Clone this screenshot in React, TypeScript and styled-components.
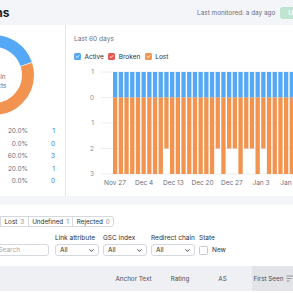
import React from 'react'
import styled, { createGlobalStyle } from 'styled-components'
import { ChevronDown } from 'lucide-react'

const GlobalStyle = createGlobalStyle`
    html, body {
        margin: 0;
        padding: 0;
        background: #f4f5f9;
    }
    body {
        font-family: Inter, 'Noto Sans', sans-serif;
        color: #2b2e38;
        overflow: hidden;
    }
`

const BLUE = '#55a8f5'
const ORANGE = '#f2944f'
const RED = '#e8574f'

const stats = [
    { label: 'Active', color: BLUE, pct: '20.0%', count: 1 },
    { label: 'Broken', color: RED, pct: '0.0%', count: 0 },
    { label: 'Lost', color: ORANGE, pct: '60.0%', count: 3 },
    { label: 'Undefined', color: '#c4c7d0', pct: '20.0%', count: 1 },
    { label: 'Rejected', color: '#8a8e99', pct: '0.0%', count: 0 },
]

const tabs = [
    { label: 'Active', count: 1 },
    { label: 'Broken', count: 0 },
    { label: 'Lost', count: 3 },
    { label: 'Undefined', count: 1 },
    { label: 'Rejected', count: 0 },
]

const filters = ['Link attribute', 'GSC index', 'Redirect chain']

// days where the lost count dropped to 2
const shortBars = [9, 18, 20, 21, 23, 24, 26, 33]
const dates = ['Nov 27', 'Dec 4', 'Dec 13', 'Dec 20', 'Dec 27', 'Jan 3', 'Jan 10', 'Jan 17']

const Donut = () => {
    const r = 34
    const c = 2 * Math.PI * r
    const parts = [
        { color: BLUE, value: 0.2 },
        { color: ORANGE, value: 0.6 },
        { color: '#c4c7d0', value: 0.2 },
    ]
    let offset = 0
    return (
        <svg width="80" height="80" viewBox="0 0 80 80">
            <g transform="rotate(-90 40 40)">
                {parts.map((p, i) => {
                    const len = p.value * c
                    const el = (
                        <circle
                            key={i}
                            cx="40"
                            cy="40"
                            r={r}
                            fill="none"
                            stroke={p.color}
                            strokeWidth="12"
                            strokeDasharray={`${len - 0.6} ${c - len + 0.6}`}
                            strokeDashoffset={-offset}
                        />
                    )
                    offset += len
                    return el
                })}
            </g>
        </svg>
    )
}

const TrendChart = () => {
    const unit = 25.5
    const zero = 31.5
    const period = 5.7
    const barW = 4.3
    const x0 = 39
    return (
        <svg width="267" height="124" viewBox="0 0 267 124" style={{ display: 'block' }}>
            {[1, 0, 1, 2, 3].map((v, i) => (
                <g key={i}>
                    <line x1="27" x2="267" y1={6 + i * unit} y2={6 + i * unit} stroke="#eceef2" strokeWidth="1" />
                    <text x="20" y={8.3 + i * unit} textAnchor="end" fontSize="6.5" fill="#8a8e99" fontFamily="Inter">
                        {v}
                    </text>
                </g>
            ))}
            {Array.from({ length: 40 }).map((_, i) => {
                const lost = shortBars.includes(i) ? 2 : 3
                const x = x0 + i * period
                return (
                    <g key={i}>
                        <rect x={x} y={zero - unit} width={barW} height={unit} fill={BLUE} />
                        <rect x={x} y={zero} width={barW} height={lost * unit} fill={ORANGE} />
                    </g>
                )
            })}
            {dates.map((d, i) => (
                <text key={d} x={41 + i * 29.2} y="119" textAnchor="middle" fontSize="6.5" fill="#6c6e79" fontFamily="Inter">
                    {d}
                </text>
            ))}
        </svg>
    )
}

const Check = () => (
    <svg width="5" height="5" viewBox="0 0 10 10">
        <path d="M2 5.2 L4.2 7.3 L8 3" fill="none" stroke="#fff" strokeWidth="1.8" strokeLinecap="round" strokeLinejoin="round" />
    </svg>
)

const SortIcon = () => (
    <svg width="8" height="7" viewBox="0 0 8 7">
        <path d="M0.5 1 H7.5 M0.5 3.5 H5.5 M0.5 6 H3.5" stroke="#8a8e99" strokeWidth="0.9" />
    </svg>
)

const App = () => {
    return (
        <>
            <GlobalStyle />
            <Viewport>
                <Page>
                    <Header>
                        <Title>Campaigns</Title>
                        <Monitored>Last monitored: a day ago</Monitored>
                        <UpdateButton>Update</UpdateButton>
                    </Header>

                    <Overview>
                        <Summary>
                            <DonutWrap>
                                <Donut />
                                <DonutLabel>
                                    Links in
                                    <br />
                                    projects
                                </DonutLabel>
                            </DonutWrap>
                            <StatList>
                                {stats.map((s) => (
                                    <StatRow key={s.label}>
                                        <StatName>
                                            <Swatch color={s.color} />
                                            {s.label}
                                        </StatName>
                                        <StatPct>{s.pct}</StatPct>
                                        <StatCount>{s.count}</StatCount>
                                    </StatRow>
                                ))}
                            </StatList>
                        </Summary>

                        <Trend>
                            <Caption>Last 60 days</Caption>
                            <Legend>
                                {[
                                    ['Active', BLUE],
                                    ['Broken', RED],
                                    ['Lost', ORANGE],
                                ].map(([name, color]) => (
                                    <LegendItem key={name}>
                                        <LegendBox color={color}>
                                            <Check />
                                        </LegendBox>
                                        {name}
                                    </LegendItem>
                                ))}
                            </Legend>
                            <ChartArea>
                                <TrendChart />
                            </ChartArea>
                        </Trend>
                    </Overview>

                    <LinksCard>
                        <Tabs>
                            {tabs.map((t) => (
                                <Tab key={t.label}>
                                    {t.label}
                                    <TabCount>{t.count}</TabCount>
                                </Tab>
                            ))}
                        </Tabs>

                        <Filters>
                            <SearchBox>Search</SearchBox>
                            {filters.map((f) => (
                                <Field key={f}>
                                    <FieldLabel>{f}</FieldLabel>
                                    <Select>
                                        All
                                        <ChevronDown size={7} strokeWidth={3} color="#2b2e38" />
                                    </Select>
                                </Field>
                            ))}
                            <Field>
                                <FieldLabel>State</FieldLabel>
                                <StateOption>
                                    <CheckBox />
                                    New
                                </StateOption>
                            </Field>
                        </Filters>

                        <TableHead>
                            <HeadCell>Source page</HeadCell>
                            <HeadCell align="center">Anchor Text</HeadCell>
                            <HeadCell align="center">Rating</HeadCell>
                            <HeadCell align="center" pad={10}>
                                AS
                            </HeadCell>
                            <HeadCell align="center" sorted>
                                First Seen
                                <SortIcon />
                            </HeadCell>
                            <HeadCell align="center" />
                        </TableHead>
                    </LinksCard>
                </Page>
            </Viewport>
        </>
    )
}

export default App

const Viewport = styled.div`
    width: 293px;
    height: 293px;
    overflow: hidden;
`

const Page = styled.div`
    width: 418px;
    margin-left: -77px;
    display: flex;
    flex-direction: column;
`

const Header = styled.div`
    height: 25px;
    display: flex;
    align-items: center;
    gap: 5px;
    padding: 0 22px 0 20px;
`

const Title = styled.h1`
    flex: 1;
    margin: 0;
    font-size: 12px;
    font-weight: 700;
    color: #171a22;
`

const Monitored = styled.span`
    font-size: 6.4px;
    color: #6c6e79;
`

const UpdateButton = styled.button`
    height: 12px;
    padding: 0 8px;
    border: 0;
    border-radius: 3px;
    background: #bfe4d2;
    color: #fff;
    font-family: Inter, sans-serif;
    font-size: 6.5px;
    font-weight: 600;
`

const Overview = styled.section`
    height: 171px;
    display: flex;
    background: #fff;
`

const Summary = styled.div`
    width: 143px;
    box-sizing: border-box;
    border-right: 1px solid #e6e7ec;
    padding-top: 10px;
    display: flex;
    flex-direction: column;
    align-items: center;
`

const DonutWrap = styled.div`
    position: relative;
    width: 80px;
    height: 80px;
`

const DonutLabel = styled.div`
    position: absolute;
    inset: 0;
    display: flex;
    align-items: center;
    justify-content: center;
    text-align: center;
    font-size: 6.5px;
    line-height: 9px;
    color: #6c6e79;
    padding-top: 14px;
`

const StatList = styled.div`
    width: 100%;
    margin-top: 10px;
`

const StatRow = styled.div`
    height: 12.5px;
    display: grid;
    grid-template-columns: 1fr 44px 27px;
    align-items: center;
    padding: 0 10px 0 16px;
    font-size: 6.5px;
`

const StatName = styled.span`
    display: flex;
    align-items: center;
    gap: 4px;
    color: #2b2e38;
`

const Swatch = styled.i`
    width: 5px;
    height: 5px;
    border-radius: 50%;
    background: ${(props) => props.color};
`

const StatPct = styled.span`
    text-align: right;
    color: #6c6e79;
`

const StatCount = styled.span`
    text-align: right;
    color: #2f7ee6;
`

const Trend = styled.div`
    flex: 1;
    padding: 9px 0 0 8px;
    display: flex;
    flex-direction: column;
`

const Caption = styled.div`
    font-size: 6.6px;
    line-height: 10px;
    color: #6c6e79;
`

const Legend = styled.div`
    display: flex;
    gap: 4.5px;
    margin-top: 8px;
    height: 9px;
    align-items: center;
`

const LegendItem = styled.span`
    display: flex;
    align-items: center;
    gap: 3.5px;
    font-size: 6.5px;
    color: #2b2e38;
`

const LegendBox = styled.span`
    width: 7px;
    height: 7px;
    border-radius: 1.5px;
    background: ${(props) => props.color};
    display: flex;
    align-items: center;
    justify-content: center;
`

const ChartArea = styled.div`
    margin-top: 4.5px;
`

const LinksCard = styled.section`
    margin-top: 9px;
    background: #fff;
    padding: 11px 16px 0 9px;
    height: 200px;
    display: flex;
    flex-direction: column;
    align-items: stretch;
`

const Tabs = styled.div`
    display: flex;
    align-self: flex-start;
    height: 11px;
    border: 1px solid #d6d8df;
    border-radius: 3px;
    box-sizing: border-box;
`

const Tab = styled.span`
    display: flex;
    align-items: center;
    gap: 3px;
    padding: 0 3.5px;
    font-size: 6.3px;
    color: #2b2e38;
    & + & {
        border-left: 1px solid #d6d8df;
    }
`

const TabCount = styled.span`
    color: #8a8e99;
`

const Filters = styled.div`
    display: flex;
    align-items: flex-end;
    gap: 4px;
    margin-top: 7px;
`

const SearchBox = styled.div`
    width: 117px;
    height: 12px;
    box-sizing: border-box;
    border: 1px solid #d6d8df;
    border-radius: 3px;
    margin-right: 2px;
    padding-left: 4px;
    display: flex;
    align-items: center;
    justify-content: flex-end;
    padding-right: 28px;
    font-size: 6.5px;
    color: #a3a6b0;
`

const Field = styled.div`
    display: flex;
    flex-direction: column;
    gap: 2px;
`

const FieldLabel = styled.span`
    font-size: 6.5px;
    line-height: 8px;
    color: #2b2e38;
`

const Select = styled.div`
    width: 44px;
    height: 12px;
    box-sizing: border-box;
    border: 1px solid #d6d8df;
    border-radius: 3px;
    padding: 0 3px 0 4px;
    display: flex;
    align-items: center;
    justify-content: space-between;
    font-size: 6.5px;
`

const StateOption = styled.label`
    height: 12px;
    display: flex;
    align-items: center;
    gap: 4px;
    font-size: 6.5px;
`

const CheckBox = styled.span`
    width: 7px;
    height: 7px;
    border: 1px solid #c5c8d0;
    border-radius: 1.5px;
`

const TableHead = styled.div`
    margin-top: 10px;
    height: 25px;
    display: grid;
    grid-template-columns: 1fr 47px 46px 49px 44px 29px;
    background: #eff0f3;
`

const HeadCell = styled.div<{ align?: string; pad?: number; sorted?: boolean }>`
    display: flex;
    align-items: center;
    justify-content: ${(props) => (props.align === 'center' ? 'center' : 'flex-start')};
    gap: 3px;
    padding-right: ${(props) => props.pad || 0}px;
    padding-left: ${(props) => (props.align === 'center' ? 0 : 8)}px;
    font-size: 6.3px;
    color: #4a4d57;
    background: ${(props) => (props.sorted ? '#e3e4e8' : 'transparent')};
`
